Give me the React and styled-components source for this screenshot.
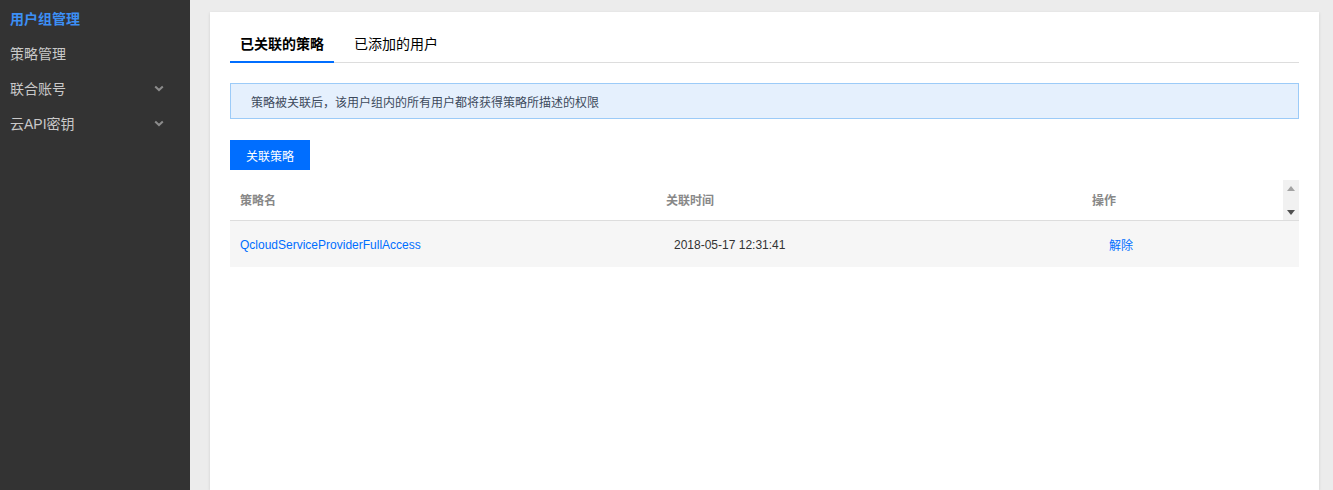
import React, { useState } from "react";
import styled, { createGlobalStyle } from "styled-components";

const Global = createGlobalStyle`
  html, body { margin: 0; padding: 0; }
  body {
    font-family: "Liberation Sans", Arial, "Noto Sans CJK SC", sans-serif;
    font-size: 12px;
    color: #333;
    background: #ececec;
  }
  * { box-sizing: border-box; }
`;

const Page = styled.div`
  display: flex;
  height: 490px;
  overflow: hidden;
`;

const Sidebar = styled.nav`
  width: 190px;
  flex: none;
  background: #333;
  padding-top: 1px;
`;

const MenuItem = styled.div`
  display: flex;
  align-items: center;
  justify-content: space-between;
  height: 35px;
  padding: 0 26px 1px 10px;
  font-size: 14px;
  color: ${(p) => (p.$active ? "#3c8ff5" : "#c9c9c9")};
  font-weight: ${(p) => (p.$active ? "bold" : "normal")};
  cursor: pointer;
`;

const Chevron = () => (
  <svg width="10" height="7" viewBox="0 0 10 7">
    <path d="M1.2 1.4 L5 5 L8.8 1.4" fill="none" stroke="#8c8c8c" strokeWidth="2" />
  </svg>
);

const Main = styled.main`
  flex: 1;
  display: flex;
  padding: 12px 14px 0 20px;
`;

const Card = styled.section`
  flex: 1;
  background: #fff;
  box-shadow: 0 1px 3px rgba(0, 0, 0, 0.12);
  padding: 16px 20px 0 20px;
`;

const Tabs = styled.div`
  display: flex;
  gap: 10px;
  border-bottom: 1px solid #ddd;
`;

const Tab = styled.div`
  position: relative;
  height: 34px;
  line-height: 33px;
  padding: 0 10px;
  font-size: 14px;
  color: #000;
  font-weight: ${(p) => (p.$active ? "bold" : "normal")};
  cursor: pointer;
  &::after {
    content: "";
    position: absolute;
    left: 0;
    right: 0;
    bottom: -1px;
    height: 2px;
    background: ${(p) => (p.$active ? "#006eff" : "transparent")};
  }
`;

const Alert = styled.div`
  margin-top: 20px;
  height: 36px;
  display: flex;
  align-items: center;
  padding-left: 20px;
  background: #e5f0fd;
  border: 1px solid #9ccbf8;
  color: #3d4a5c;
  font-size: 12px;
`;

const Button = styled.button`
  margin-top: 21px;
  width: 80px;
  height: 30px;
  border: none;
  background: #006eff;
  color: #fff;
  font-family: inherit;
  font-size: 12px;
  cursor: pointer;
`;

const Table = styled.div`
  margin-top: 10px;
`;

const HeadRow = styled.div`
  display: grid;
  grid-template-columns: 426px 426px 1fr 16px;
  height: 41px;
  border-bottom: 1px solid #ddd;
`;

const HeadCell = styled.div`
  display: flex;
  align-items: center;
  padding: 0 0 2px 10px;
  color: #888;
  font-weight: bold;
  font-size: 12px;
`;

const Scrollbar = styled.div`
  background: #f1f1f1;
  display: flex;
  flex-direction: column;
  justify-content: space-between;
  align-items: center;
  padding: 6px 0 5px;
`;

const BodyRow = styled.div`
  display: grid;
  grid-template-columns: 434px 435px 1fr;
  height: 46px;
  background: #f6f6f6;
`;

const Cell = styled.div`
  display: flex;
  align-items: center;
  padding: 1px 0 0 10px;
  font-size: 12px;
  color: ${(p) => (p.$link ? "#006eff" : "#333")};
  cursor: ${(p) => (p.$link ? "pointer" : "default")};
`;

const Arrow = ({ up }) => (
  <svg width="8" height="5" viewBox="0 0 8 5">
    {up ? (
      <path d="M0 5 L4 0 L8 5 Z" fill="#a3a3a3" />
    ) : (
      <path d="M0 0 L8 0 L4 5 Z" fill="#505050" />
    )}
  </svg>
);

export default function App() {
  const [tab, setTab] = useState(0);
  const menu = [
    { label: "用户组管理", active: true },
    { label: "策略管理" },
    { label: "联合账号", sub: true },
    { label: "云API密钥", sub: true },
  ];
  return (
    <>
      <Global />
      <Page>
        <Sidebar>
          {menu.map((m) => (
            <MenuItem key={m.label} $active={m.active}>
              <span>{m.label}</span>
              {m.sub && <Chevron />}
            </MenuItem>
          ))}
        </Sidebar>
        <Main>
          <Card>
            <Tabs>
              <Tab $active={tab === 0} onClick={() => setTab(0)}>已关联的策略</Tab>
              <Tab $active={tab === 1} onClick={() => setTab(1)}>已添加的用户</Tab>
            </Tabs>
            <Alert>策略被关联后，该用户组内的所有用户都将获得策略所描述的权限</Alert>
            <Button>关联策略</Button>
            <Table>
              <HeadRow>
                <HeadCell>策略名</HeadCell>
                <HeadCell>关联时间</HeadCell>
                <HeadCell>操作</HeadCell>
                <Scrollbar>
                  <Arrow up />
                  <Arrow />
                </Scrollbar>
              </HeadRow>
              <BodyRow>
                <Cell $link>QcloudServiceProviderFullAccess</Cell>
                <Cell>2018-05-17 12:31:41</Cell>
                <Cell $link>解除</Cell>
              </BodyRow>
            </Table>
          </Card>
        </Main>
      </Page>
    </>
  );
}
